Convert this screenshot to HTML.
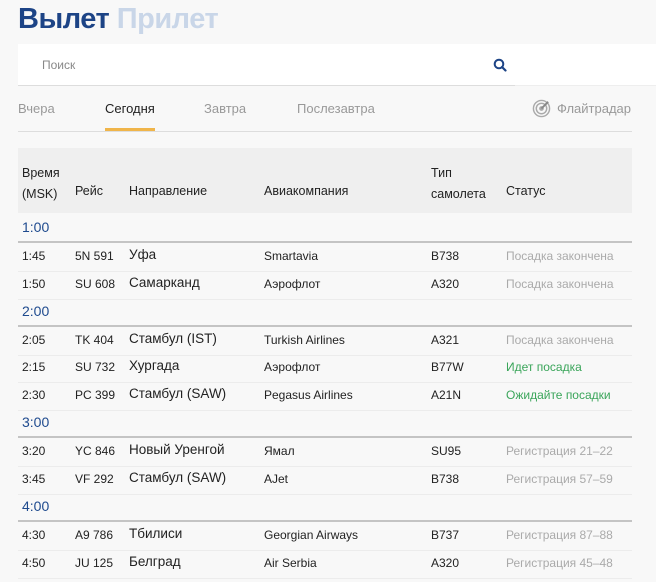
<html><head><style>
body{margin:0;width:656px;height:582px;overflow:hidden;background:#f8f8f8;font-family:"Liberation Sans",Arial,sans-serif;color:#222}
.t{position:absolute;white-space:nowrap}
.row{position:absolute;left:18px;width:614px;height:28px;border-bottom:1px solid #ececec;font-size:12px}
.row span{position:absolute;top:6px}
.row span.d{top:4px;font-size:13.5px}
.grp{position:absolute;left:18px;width:614px;height:28px;border-bottom:2px solid #c4c4c4;color:#1e4a8e;font-size:14px}
.grp span{position:absolute;left:4px;top:6px}
</style></head><body>
<div class="t" style="left:18px;top:3px;font-size:29px;font-weight:bold;color:#1d4486;letter-spacing:-0.5px">Вылет <span style="color:#c9d6e8">Прилет</span></div>
<div style="position:absolute;left:18px;top:44px;width:497px;height:41px;background:#fff;border-bottom:1px solid #ddd"></div>
<div style="position:absolute;left:515px;top:44px;width:141px;height:41px;background:#fff;border-bottom:1px solid #eee"></div>
<div class="t" style="left:42px;top:58px;font-size:12px;color:#888">Поиск</div>
<svg style="position:absolute;left:493px;top:58px" width="14" height="14" viewBox="0 0 14 14"><circle cx="6" cy="6" r="4.3" fill="none" stroke="#1d4486" stroke-width="2"/><path d="M9 9l3.5 3.5" stroke="#1d4486" stroke-width="2.2" stroke-linecap="round"/></svg>
<div class="t" style="left:18px;top:101px;font-size:13px;color:#999">Вчера</div>
<div class="t" style="left:105px;top:101px;font-size:13px;color:#222">Сегодня</div>
<div style="position:absolute;left:105px;top:128px;width:50px;height:3px;background:#f0b54a"></div>
<div class="t" style="left:204px;top:101px;font-size:13px;color:#999">Завтра</div>
<div class="t" style="left:297px;top:101px;font-size:13px;color:#999">Послезавтра</div>
<svg style="position:absolute;left:532px;top:99px" width="19" height="19" viewBox="0 0 20 20"><circle cx="10" cy="10" r="8.5" fill="none" stroke="#aaa" stroke-width="1.5"/><circle cx="10" cy="10" r="5.5" fill="none" stroke="#aaa" stroke-width="1.5"/><circle cx="10" cy="10" r="2.5" fill="#aaa"/><path d="M10 10L17 3" stroke="#888" stroke-width="2"/></svg>
<div class="t" style="left:557px;top:101px;font-size:13px;color:#999">Флайтрадар</div>
<div style="position:absolute;left:18px;top:131px;width:614px;height:1px;background:#ddd"></div>
<div style="position:absolute;left:18px;top:148px;width:614px;height:65px;background:#efefef;font-size:12.5px">
<span class="t" style="left:4px;top:15px;line-height:21px">Время<br>(MSK)</span>
<span class="t" style="left:57px;top:36px">Рейс</span>
<span class="t" style="left:111px;top:36px">Направление</span>
<span class="t" style="left:246px;top:36px">Авиакомпания</span>
<span class="t" style="left:413px;top:15px;line-height:21px">Тип<br>самолета</span>
<span class="t" style="left:488px;top:36px">Статус</span>
</div>
<div class="grp" style="top:213px"><span>1:00</span></div>
<div class="row" style="top:243px"><span style="left:4px">1:45</span><span style="left:57px">5N 591</span><span class="d" style="left:111px">Уфа</span><span style="left:246px">Smartavia</span><span style="left:413px">B738</span><span style="left:488px;color:#aaa">Посадка закончена</span></div>
<div class="row" style="top:271px"><span style="left:4px">1:50</span><span style="left:57px">SU 608</span><span class="d" style="left:111px">Самарканд</span><span style="left:246px">Аэрофлот</span><span style="left:413px">A320</span><span style="left:488px;color:#aaa">Посадка закончена</span></div>
<div class="grp" style="top:297px"><span>2:00</span></div>
<div class="row" style="top:327px"><span style="left:4px">2:05</span><span style="left:57px">TK 404</span><span class="d" style="left:111px">Стамбул (IST)</span><span style="left:246px">Turkish Airlines</span><span style="left:413px">A321</span><span style="left:488px;color:#aaa">Посадка закончена</span></div>
<div class="row" style="top:354px"><span style="left:4px">2:15</span><span style="left:57px">SU 732</span><span class="d" style="left:111px">Хургада</span><span style="left:246px">Аэрофлот</span><span style="left:413px">B77W</span><span style="left:488px;color:#3aa55a">Идет посадка</span></div>
<div class="row" style="top:382px"><span style="left:4px">2:30</span><span style="left:57px">PC 399</span><span class="d" style="left:111px">Стамбул (SAW)</span><span style="left:246px">Pegasus Airlines</span><span style="left:413px">A21N</span><span style="left:488px;color:#3aa55a">Ожидайте посадки</span></div>
<div class="grp" style="top:408px"><span>3:00</span></div>
<div class="row" style="top:438px"><span style="left:4px">3:20</span><span style="left:57px">YC 846</span><span class="d" style="left:111px">Новый Уренгой</span><span style="left:246px">Ямал</span><span style="left:413px">SU95</span><span style="left:488px;color:#aaa">Регистрация 21–22</span></div>
<div class="row" style="top:466px"><span style="left:4px">3:45</span><span style="left:57px">VF 292</span><span class="d" style="left:111px">Стамбул (SAW)</span><span style="left:246px">AJet</span><span style="left:413px">B738</span><span style="left:488px;color:#aaa">Регистрация 57–59</span></div>
<div class="grp" style="top:492px"><span>4:00</span></div>
<div class="row" style="top:522px"><span style="left:4px">4:30</span><span style="left:57px">A9 786</span><span class="d" style="left:111px">Тбилиси</span><span style="left:246px">Georgian Airways</span><span style="left:413px">B737</span><span style="left:488px;color:#aaa">Регистрация 87–88</span></div>
<div class="row" style="top:550px"><span style="left:4px">4:50</span><span style="left:57px">JU 125</span><span class="d" style="left:111px">Белград</span><span style="left:246px">Air Serbia</span><span style="left:413px">A320</span><span style="left:488px;color:#aaa">Регистрация 45–48</span></div>
</body></html>
